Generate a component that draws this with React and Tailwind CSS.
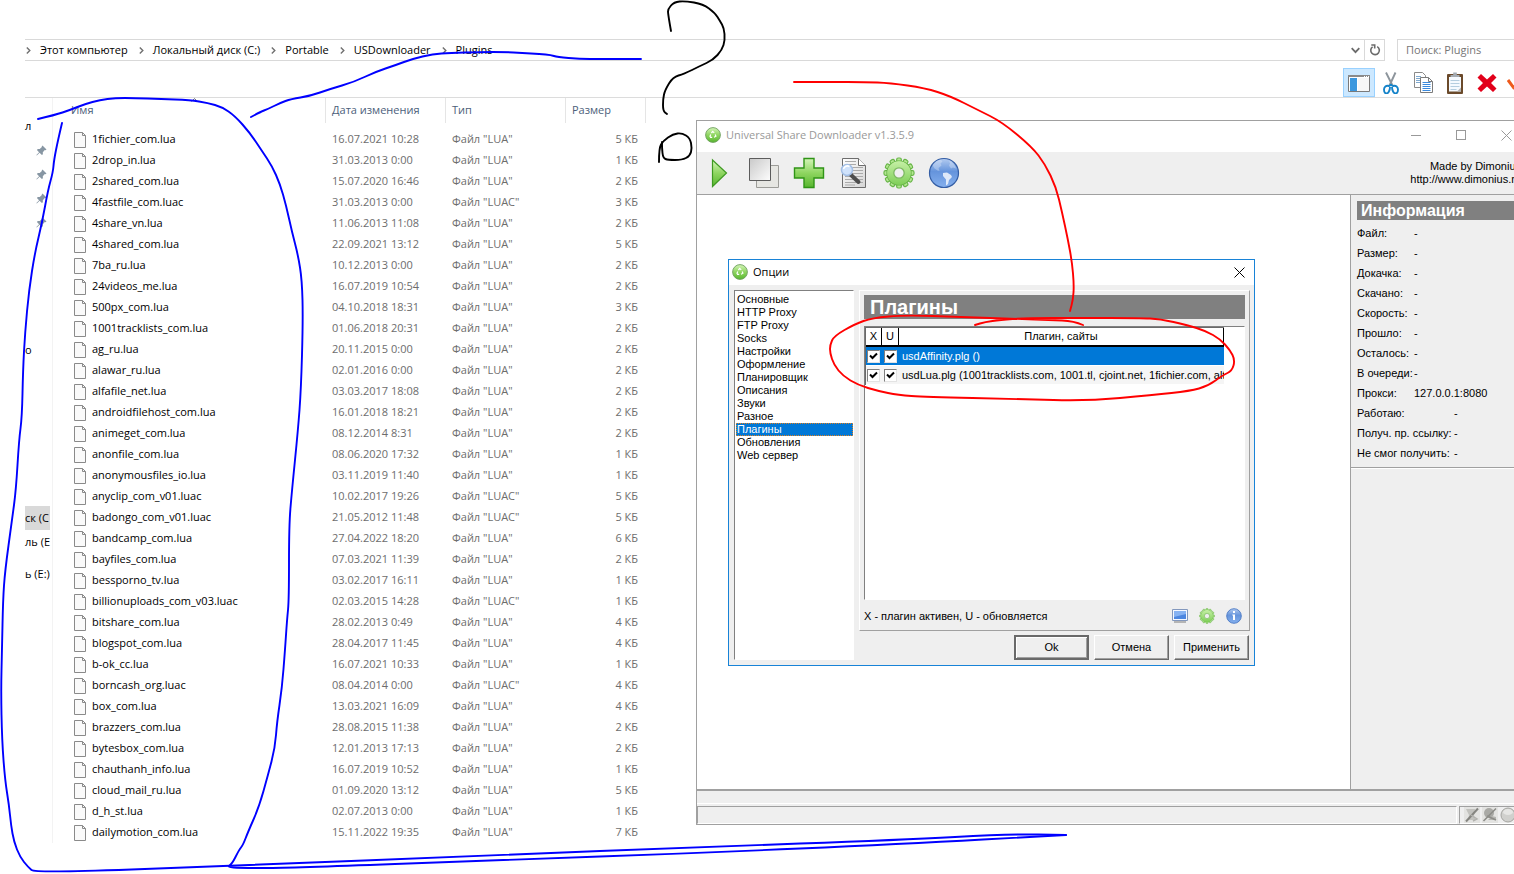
import { useState } from "react";

const CRUMBS = ["Этот компьютер", "Локальный диск (C:)", "Portable", "USDownloader", "Plugins"];

const FILES = [
  ["1fichier_com.lua", "16.07.2021 10:28", 5],
  ["2drop_in.lua", "31.03.2013 0:00", 1],
  ["2shared_com.lua", "15.07.2020 16:46", 2],
  ["4fastfile_com.luac", "31.03.2013 0:00", 3],
  ["4share_vn.lua", "11.06.2013 11:08", 2],
  ["4shared_com.lua", "22.09.2021 13:12", 5],
  ["7ba_ru.lua", "10.12.2013 0:00", 2],
  ["24videos_me.lua", "16.07.2019 10:54", 2],
  ["500px_com.lua", "04.10.2018 18:31", 3],
  ["1001tracklists_com.lua", "01.06.2018 20:31", 2],
  ["ag_ru.lua", "20.11.2015 0:00", 2],
  ["alawar_ru.lua", "02.01.2016 0:00", 2],
  ["alfafile_net.lua", "03.03.2017 18:08", 2],
  ["androidfilehost_com.lua", "16.01.2018 18:21", 2],
  ["animeget_com.lua", "08.12.2014 8:31", 2],
  ["anonfile_com.lua", "08.06.2020 17:32", 1],
  ["anonymousfiles_io.lua", "03.11.2019 11:40", 1],
  ["anyclip_com_v01.luac", "10.02.2017 19:26", 5],
  ["badongo_com_v01.luac", "21.05.2012 11:48", 5],
  ["bandcamp_com.lua", "27.04.2022 18:20", 6],
  ["bayfiles_com.lua", "07.03.2021 11:39", 2],
  ["bessporno_tv.lua", "03.02.2017 16:11", 1],
  ["billionuploads_com_v03.luac", "02.03.2015 14:28", 1],
  ["bitshare_com.lua", "28.02.2013 0:49", 4],
  ["blogspot_com.lua", "28.04.2017 11:45", 4],
  ["b-ok_cc.lua", "16.07.2021 10:33", 1],
  ["borncash_org.luac", "08.04.2014 0:00", 4],
  ["box_com.lua", "13.03.2021 16:09", 4],
  ["brazzers_com.lua", "28.08.2015 11:38", 2],
  ["bytesbox_com.lua", "12.01.2013 17:13", 2],
  ["chauthanh_info.lua", "16.07.2019 10:52", 1],
  ["cloud_mail_ru.lua", "01.09.2020 13:12", 5],
  ["d_h_st.lua", "02.07.2013 0:00", 1],
  ["dailymotion_com.lua", "15.11.2022 19:35", 7],
];

const OPTIONS = [
  "Основные",
  "HTTP Proxy",
  "FTP Proxy",
  "Socks",
  "Настройки",
  "Оформление",
  "Планировщик",
  "Описания",
  "Звуки",
  "Разное",
  "Плагины",
  "Обновления",
  "Web сервер",
];

const INFO = [
  ["Файл:", "-"],
  ["Размер:", "-"],
  ["Докачка:", "-"],
  ["Скачано:", "-"],
  ["Скорость:", "-"],
  ["Прошло:", "-"],
  ["Осталось:", "-"],
  ["В очереди:", "-"],
  ["Прокси:", "127.0.0.1:8080"],
];

const COUNTERS = [
  ["Работаю:", "-"],
  ["Получ. пр. ссылку:", "-"],
  ["Не смог получить:", "-"],
];

const PLUGINS = [
  "usdAffinity.plg ()",
  "usdLua.plg (1001tracklists.com, 1001.tl, cjoint.net, 1fichier.com, alterupload.com)",
];

// Freehand strokes: pen colour and the points the pen went through
const STROKES = [
  ["#0000ff", [[251, 117], [260, 112], [268, 109], [280, 103], [291, 99], [310, 96], [330, 89], [354, 82], [375, 72], [396, 65], [412, 59], [433, 54], [450, 53], [480, 52], [505, 52], [522, 53], [540, 54], [551, 55], [557, 57], [580, 59], [600, 59], [641, 59]]],
  ["#0000ff", [[38, 119], [55, 115], [70, 110], [85, 104], [100, 100], [115, 98], [135, 98], [160, 99], [190, 100], [208, 103], [222, 107], [235, 116], [250, 133], [262, 151], [272, 166], [280, 184], [286, 205], [292, 232], [298, 255], [302, 280], [303, 320], [301, 390], [298, 430], [292, 490], [289, 525], [289, 600], [287, 620], [285, 650], [282, 688], [277, 722], [275, 748], [268, 775], [259, 807], [248, 832], [243, 845], [239, 850], [232, 864], [227, 867], [240, 868], [290, 868], [500, 860], [700, 853], [900, 844], [1066, 835]]],
  ["#0000ff", [[62, 123], [58, 140], [54, 160], [53, 172], [48, 190], [42, 223], [35, 252], [29, 290], [25, 333], [23, 370], [22, 417], [19, 440], [16, 490], [12, 520], [5, 571], [3, 600], [2, 650], [1, 690], [2, 740], [5, 780], [9, 805], [11, 825], [14, 842], [20, 857], [28, 867], [35, 873], [228, 866], [500, 855], [700, 847], [900, 840], [1010, 834], [1066, 835]]],
  ["#000000", [[671, 31], [668, 14], [668, 9], [674, 2], [685, 1], [703, 4], [715, 13], [720, 21], [724, 28], [725, 40], [722, 50], [713, 60], [700, 66], [684, 74], [673, 77], [665, 90], [663, 99], [663, 111], [667, 114]]],
  ["#000000", [[659, 162], [659, 148], [663, 141], [673, 134], [682, 133], [690, 138], [692, 148], [690, 156], [682, 160], [668, 160], [663, 158], [662, 148], [662, 142]]],
  ["#ff0000", [[794, 82], [830, 82], [865, 82], [890, 83], [925, 88], [950, 96], [978, 110], [1002, 122], [1032, 147], [1045, 164], [1056, 187], [1062, 212], [1068, 240], [1072, 262], [1074, 285], [1073, 300], [1070, 311]]],
  ["#ff0000", [[1083, 325], [1074, 321], [1050, 320], [1020, 319], [960, 317], [905, 315], [872, 318], [855, 324], [834, 336], [830, 345], [830, 353], [834, 365], [843, 376], [858, 385], [878, 391], [898, 395], [925, 397], [1020, 399], [1087, 401], [1153, 395], [1190, 391], [1208, 386], [1223, 375], [1232, 371], [1235, 360], [1230, 350], [1220, 339], [1206, 331], [1187, 325], [1160, 319], [1140, 318], [1080, 318], [1025, 318], [1000, 320], [985, 322], [975, 325]]],
];

const SUNKEN = "border border-t-[#808080] border-l-[#808080] border-r-white border-b-white";
const GEAR_TEETH = [0, 30, 60, 90, 120, 150, 180, 210, 240, 270, 300, 330];

function Gradients() {
  return (
    <svg className="absolute size-0" aria-hidden="true">
      <defs>
        <linearGradient id="green" x1="0" y1="0" x2="0" y2="1">
          <stop offset="0" stopColor="#d4f5b8" />
          <stop offset="0.5" stopColor="#8ed560" />
          <stop offset="1" stopColor="#57b62e" />
        </linearGradient>
        <linearGradient id="gear" x1="0" y1="0" x2="0" y2="1">
          <stop offset="0" stopColor="#c5efa5" />
          <stop offset="1" stopColor="#7fcf58" />
        </linearGradient>
        <linearGradient id="grey" x1="0" y1="0" x2="1" y2="1">
          <stop offset="0" stopColor="#c9c9c9" />
          <stop offset="1" stopColor="#fdfdfd" />
        </linearGradient>
        <linearGradient id="globe" x1="0" y1="0" x2="0" y2="1">
          <stop offset="0" stopColor="#b3cbf0" />
          <stop offset="0.45" stopColor="#6594dc" />
          <stop offset="1" stopColor="#85b0ee" />
        </linearGradient>
        <linearGradient id="sheet" x1="0" y1="0" x2="1" y2="1">
          <stop offset="0" stopColor="#ffffff" />
          <stop offset="1" stopColor="#d5d5d5" />
        </linearGradient>
      </defs>
    </svg>
  );
}

function AppIcon() {
  return (
    <svg className="size-4 shrink-0" viewBox="0 0 16 16">
      <circle cx="8" cy="8" r="7.4" fill="url(#green)" stroke="#6f9f60" strokeWidth="0.9" />
      <path d="M6.4 6l1.300-1.600 1.500 1.500M10.200 7.500l.7 1.800-1.900.9M7.200 10.300H5.600l-.6-1.100.8-1.700" fill="none" stroke="#fff" strokeWidth="1.200" />
    </svg>
  );
}

function GearIcon({ className }) {
  return (
    <svg className={className} viewBox="0 0 32 32">
      <g fill="url(#gear)" stroke="#68b548" strokeWidth="1.200">
        {GEAR_TEETH.map((angle) => (
          <rect key={angle} x="13.700" y="1" width="4.600" height="6" rx="1.500" transform={`rotate(${angle} 16 16)`} />
        ))}
        <circle cx="16" cy="16" r="12" />
      </g>
      <circle cx="16" cy="16" r="11.800" fill="url(#gear)" />
      <circle cx="16" cy="16" r="5.200" fill="#efefef" stroke="#7db862" strokeWidth="1.300" />
    </svg>
  );
}

function FileIcon() {
  return (
    <svg className="h-4 w-3 shrink-0" viewBox="0 0 12 16">
      <path d="M.5.5h8l3 3v12H.5z" fill="#fafafa" stroke="#8a8a8a" />
      <path d="M8.500.5v3h3" fill="none" stroke="#8a8a8a" />
    </svg>
  );
}

function PinIcon() {
  return (
    <svg className="size-[11px]" viewBox="0 0 11 11" fill="#8796a3">
      <path d="M6.500.5l4 4-1 .8-.7-.2-2 2.200.1 1.900-1 .9-2.300-2.300L.8 10.500.4 10l2.700-2.800L.9 5l.9-1 1.900.1 2.200-2-.2-.7z" />
    </svg>
  );
}

function Chevron() {
  return (
    <svg className="h-[7px] w-[5px] shrink-0" viewBox="0 0 5 7" fill="none" stroke="#707070" strokeWidth="1.400">
      <path d="M.8.6L3.800 3.500.8 6.400" />
    </svg>
  );
}

function CloseIcon() {
  return (
    <svg className="size-[11px]" viewBox="0 0 11 11" fill="none" stroke="currentColor">
      <path d="M.5.5l10 10M10.500.5l-10 10" />
    </svg>
  );
}

function AddressBar() {
  return (
    <div className="flex h-[22px] gap-3 pl-[25px] text-[11px]">
      <div className="flex flex-1 border-y border-r border-[#d9d9d9]">
        <nav className="flex flex-1 items-center">
          {CRUMBS.map((crumb) => (
            <div key={crumb} className="flex items-center">
              <span className="flex w-[15px] pl-px">
                <Chevron />
              </span>
              <a href="#" className="pr-2.5 whitespace-nowrap text-black">{crumb}</a>
            </div>
          ))}
        </nav>
        <button aria-label="История" className="flex w-[19px] items-center justify-center border-r border-[#d9d9d9]">
          <svg className="h-[7px] w-[9px]" viewBox="0 0 9 7" fill="none" stroke="#6b6b6b" strokeWidth="1.800">
            <path d="M.7 1.200l3.800 3.900 3.800-3.900" />
          </svg>
        </button>
        <button aria-label="Обновить" className="flex w-[19px] items-center justify-center">
          <svg className="size-3" viewBox="0 0 12 12" fill="none" stroke="#6b6b6b" strokeWidth="1.600">
            <path d="M8.200 2.600a4.300 4.300 0 1 1-4.600.2" />
            <path d="M2.300 1h3.400v3.500" />
          </svg>
        </button>
      </div>
      <div className="flex w-[117px] border-y border-l border-[#d9d9d9]">
        <input
          type="search"
          aria-label="Поиск"
          placeholder="Поиск: Plugins"
          className="w-full px-2 outline-none placeholder:text-[#767676]"
        />
      </div>
    </div>
  );
}

function Ribbon() {
  return (
    <div className="ml-[25px] flex h-[37px] items-end justify-end overflow-hidden border-b border-[#dcdcdc]">
      <button aria-label="Область навигации" className="flex h-[29px] w-8 items-center justify-center border border-[#99d1ff] bg-[#cce8ff] pt-0.5">
        <svg className="h-[17px] w-[22px]" viewBox="0 0 22 17">
          <path d="M.5.5h21v16H.5z" fill="#fff" stroke="#7a7a7a" />
          <path d="M0 0h22v2H0z" fill="#8a8a8a" />
          <path d="M16 1h1v1h-1zM18 1h1v1h-1zM20 1h1v1h-1z" fill="#fff" />
          <path d="M2 3h7v13H2z" fill="#3b97de" />
          <path d="M10 3h11v13H10z" fill="#f7f7f7" />
        </svg>
      </button>
      <button aria-label="Вырезать" className="flex h-[29px] w-8 items-center justify-center">
        <svg className="h-[22px] w-4" viewBox="0 0 16 22" fill="none">
          <path d="M3 .5l6.500 13M12.500.5L6.500 13.500" stroke="#8d959c" strokeWidth="1.900" />
          <path d="M9 12.500L6 14c-3-1-5 1-5 3.500s1 4 2.500 4S7 19 7 15M7 12.500l3 1.500c3-1 5 1 5 3.500s-1 4-2.500 4S9 19 9 15" stroke="#1583c9" strokeWidth="1.900" />
        </svg>
      </button>
      <button aria-label="Копировать" className="flex h-[29px] w-8 items-center justify-center">
        <svg className="h-[22px] w-[19px]" viewBox="0 0 19 22">
          <path d="M.5.5h8l3 3v12H.5z" fill="#fff" stroke="#8a8a8a" />
          <path d="M2 4.500h5M2 6.500h5M2 8.500h5M2 10.500h5" stroke="#7fa9cf" />
          <path d="M6.500 5.500h8l4 4v11h-12z" fill="#fff" stroke="#7b7b7b" />
          <path d="M14.500 5.500v4h4" fill="none" stroke="#7b7b7b" />
          <path d="M8.500 10.500h8M8.500 12.500h8M8.500 14.500h8M8.500 16.500h8M8.500 18.500h8" stroke="#3a8ade" />
        </svg>
      </button>
      <button aria-label="Вставить" className="flex h-[29px] w-8 items-center justify-center">
        <svg className="h-[22px] w-4" viewBox="0 0 16 22">
          <rect y="2" width="16" height="20" rx="1" fill="#6b4a2b" />
          <path d="M2 5h12v14.500H2z" fill="#f5faff" />
          <path d="M3.500 8.500h9M3.500 11.500h9M3.500 14.500h9M3.500 17.500h6" stroke="#b5cee0" />
          <path d="M10 19.500l4-4v4z" fill="#b4b4b4" />
          <path d="M3.500 5V3h2.700V.5h3.600V3h2.700v2z" fill="#a4abb2" />
        </svg>
      </button>
      <button aria-label="Удалить" className="flex h-[29px] w-8 items-center justify-center">
        <svg className="size-5" viewBox="0 0 20 20">
          <path d="M4 1l6 5.500L16 1l3.500 3.500L14 10l5.500 5.500L16 19l-6-5.500L4 19 .5 15.500 6 10 .5 4.500z" fill="#e2001a" />
        </svg>
      </button>
      <button aria-label="Свойства" className="flex h-[29px] w-[11px] items-center overflow-hidden pl-1">
        <svg className="h-[14px] w-[18px] shrink-0" viewBox="0 0 18 14" fill="none" stroke="#ee5a1c" strokeWidth="3">
          <path d="M1 4l5.500 7.500L17 1" />
        </svg>
      </button>
    </div>
  );
}

function NavPane() {
  return (
    <aside className="flex w-[53px] shrink-0 flex-col border-r border-[#f3f3f3] pt-4 pr-0.5 pl-[25px] text-[11px] whitespace-nowrap">
      <div className="flex h-6 items-center">л</div>
      {[0, 1, 2, 3].map((pin) => (
        <div key={pin} className="flex h-6 items-center justify-center pl-2">
          <PinIcon />
        </div>
      ))}
      <div className="mt-[104px] flex h-6 items-center">о</div>
      <div className="mt-36 flex h-6 items-center bg-[#d9d9d9]">ск (C</div>
      <div className="flex h-6 items-center">ль (E</div>
      <div className="mt-2 flex h-6 items-center">ь (E:)</div>
    </aside>
  );
}

function FileList() {
  return (
    <table className="w-[593px] table-fixed border-separate border-spacing-0 self-start text-[11px] text-[#6d6d6d]">
      <thead className="text-left text-[#4c607a]">
        <tr className="h-[25px]">
          <th className="relative w-[273px] border-r border-[#e5e5e5] pl-[18px] font-normal">
            Имя
            <svg className="absolute top-0 left-[138px] h-1 w-[7px]" viewBox="0 0 7 4" fill="none" stroke="#777">
              <path d="M.5 3.500l3-3 3 3" />
            </svg>
          </th>
          <th className="w-[120px] border-r border-[#e5e5e5] pl-1.5 font-normal">Дата изменения</th>
          <th className="w-[120px] border-r border-[#e5e5e5] pl-1.5 font-normal">Тип</th>
          <th className="w-[80px] border-r border-[#e5e5e5] pl-1.5 font-normal">Размер</th>
        </tr>
      </thead>
      <tbody className="before:block before:h-1.5">
        {FILES.map(([name, date, size]) => (
          <tr key={name} className="h-[21px]">
            <td className="pl-[21px] text-black">
              <div className="flex items-center gap-1.5">
                <FileIcon />
                {name}
              </div>
            </td>
            <td className="pl-1.5">{date}</td>
            <td className="pl-1.5">Файл "{name.split(".").pop().toUpperCase()}"</td>
            <td className="pr-2 text-right">{size} КБ</td>
          </tr>
        ))}
      </tbody>
    </table>
  );
}

function Toolbar() {
  const button = "flex h-full w-[45px] items-center pl-1.5";
  return (
    <div className="flex h-[43px] shrink-0 border-b border-[#a0a0a0] bg-[#efefef]">
      <button aria-label="Старт" className={button}>
        <svg className="size-8" viewBox="0 0 32 32">
          <path d="M9.500 3L23.500 16 9.500 29.500z" fill="url(#green)" stroke="#3f9a22" strokeWidth="1.200" />
        </svg>
      </button>
      <button aria-label="Стоп" className={button}>
        <svg className="size-8" viewBox="0 0 32 32">
          <path d="M8.500 8.500h22v22h-22z" fill="#e6e6e2" stroke="#9c9c98" />
          <path d="M1.500 1.500h21v22h-21z" fill="url(#grey)" stroke="#5c5c5c" />
        </svg>
      </button>
      <button aria-label="Добавить" className={button}>
        <svg className="size-8" viewBox="0 0 32 32">
          <path d="M11 1.500h10v9.500h9.500v10H21v9.500H11V21H1.500V11H11z" fill="url(#green)" stroke="#2f9416" strokeWidth="1.400" />
        </svg>
      </button>
      <button aria-label="Журнал" className={button}>
        <svg className="size-8" viewBox="0 0 32 32">
          <path d="M4.500 1.500h16l7 7v22h-23z" fill="url(#sheet)" stroke="#6d6d6d" />
          <path d="M20.500 1.500v7h7" fill="#fff" stroke="#6d6d6d" />
          <path d="M7 4.500h11M7 7.500h11M7 10.500h18M7 13.500h18M7 16.500h18M7 19.500h18M7 22.500h18M7 25.500h18M7 28h10" stroke="#aaa" />
          <path d="M12.500 17.500l8 7.500" stroke="#4d4d4d" strokeWidth="4" strokeLinecap="round" />
          <circle cx="9" cy="13" r="5.500" fill="#cfe2fb" stroke="#a3bfe6" strokeWidth="1.500" />
          <path d="M5.500 12a4 4 0 0 1 6-2.500" fill="none" stroke="#fff" strokeWidth="1.500" />
        </svg>
      </button>
      <button aria-label="Настройки" className={button}>
        <GearIcon className="size-8" />
      </button>
      <button aria-label="Сайт" className={button}>
        <svg className="size-8" viewBox="0 0 32 32">
          <circle cx="16" cy="16" r="14.500" fill="url(#globe)" stroke="#345ea5" strokeWidth="1.200" />
          <path d="M4.500 8c2-3 5-5 8-5.500l2 2-2 2 1 2-3 2.500 1 3-2-.5-3-2zM21 3.500c3 1 6 4 7 8l-3-1-2 1-2-3 1-2z" fill="#e9f1fc" fillOpacity="0.350" />
          <path d="M15 16l4-.5 4 2.500 1 2-3 3-1 4-2 1.500 0-6-3-3.500z" fill="#f1f6fd" fillOpacity="0.850" />
        </svg>
      </button>
      <p className="flex-1 self-center pr-2 text-right text-[11px] leading-[13px] text-black">
        Made by Dimonius
        <br />
        http://www.dimonius.ru
      </p>
    </div>
  );
}

function InfoPanel() {
  return (
    <aside className="flex w-[179px] shrink-0 flex-col border-l border-[#a0a0a0] bg-[#efefef] pt-1.5 text-[11px] text-black">
      <h2 className="ml-1.5 h-[19px] bg-[#808080] pl-1 text-base leading-[19px] font-bold text-white">Информация</h2>
      <dl className="mt-[3px] ml-1.5">
        {INFO.map(([label, value]) => (
          <div key={label} className="flex h-5 items-center">
            <dt className="w-[57px] whitespace-nowrap">{label}</dt>
            <dd>{value}</dd>
          </div>
        ))}
        {COUNTERS.map(([label, value]) => (
          <div key={label} className="flex h-5 items-center">
            <dt className="w-[97px] whitespace-nowrap">{label}</dt>
            <dd>{value}</dd>
          </div>
        ))}
      </dl>
      <hr className="mt-1 border-t border-b border-t-[#a0a0a0] border-b-white" />
    </aside>
  );
}

function StatusBar() {
  return (
    <footer className="shrink-0 border-t-2 border-[#a0a0a0] bg-[#efefef]">
      <div className="h-[13px] border-b border-white" />
      <div className="mt-0.5 flex h-[18px] gap-0.5">
        <div className="flex-1 border border-t-[#a0a0a0] border-r-white border-b-white border-l-[#a0a0a0]" />
        <div className="flex w-[70px] items-center gap-0.5 overflow-hidden border border-t-[#a0a0a0] border-r-white border-b-white border-l-[#a0a0a0] pl-1">
          <svg className="size-4 shrink-0" viewBox="0 0 16 16">
            <path d="M0 0h16v16H0z" fill="#e3e3e1" />
            <path d="M2 2h9l-1 7 2 4H4l1-5z" fill="#c2c2be" />
            <path d="M2 14.500L14 1.500" stroke="#858580" strokeWidth="2" />
            <path d="M7 8l6 4-4 2" fill="none" stroke="#b2b2ae" strokeWidth="1.500" />
          </svg>
          <svg className="size-4 shrink-0" viewBox="0 0 16 16">
            <path d="M0 0h16v16H0z" fill="#e3e3e1" />
            <circle cx="7" cy="6" r="5" fill="#a9a9a5" />
            <path d="M6 13h8v-3l-4-1z" fill="#b5b5b1" />
            <path d="M1.500 14L14 1.500M5 9l9 4" stroke="#8d8d88" strokeWidth="1.600" />
          </svg>
          <svg className="size-4 shrink-0" viewBox="0 0 16 16">
            <circle cx="8" cy="8" r="7" fill="#d0d0cd" stroke="#a5a5a1" />
            <ellipse cx="8" cy="5" rx="5" ry="3" fill="#e6e6e4" />
          </svg>
        </div>
      </div>
    </footer>
  );
}

function DownloaderWindow() {
  return (
    <section className="absolute top-[120px] -right-4 bottom-[49px] left-[696px] flex flex-col border border-[#a0a0a0] bg-white font-['Liberation_Sans',sans-serif]">
      <header className="flex h-[31px] shrink-0 items-center pb-[3px] pl-2 font-['Open_Sans',sans-serif] text-[#999]">
        <AppIcon />
        <h1 className="flex-1 pl-[5px] text-[11px]">Universal Share Downloader v1.3.5.9</h1>
        <button aria-label="Свернуть" className="flex h-full w-[45px] items-center justify-center">
          <span className="h-px w-2.5 bg-[#999]" />
        </button>
        <button aria-label="Развернуть" className="flex h-full w-[45px] items-center justify-center">
          <span className="size-2.5 border border-[#999]" />
        </button>
        <button aria-label="Закрыть" className="flex h-full w-[46px] items-center justify-center">
          <CloseIcon />
        </button>
      </header>
      <Toolbar />
      <div className="flex flex-1">
        <main className="flex-1" />
        <InfoPanel />
      </div>
      <StatusBar />
    </section>
  );
}

function Check({ label }) {
  return (
    <span className="relative flex size-[13px] border border-t-[#808080] border-r-[#e3e3e3] border-b-[#e3e3e3] border-l-[#808080] bg-white">
      <input type="checkbox" aria-label={label} defaultChecked className="peer absolute inset-0 appearance-none" />
      <svg className="pointer-events-none invisible size-[11px] peer-checked:visible" viewBox="0 0 11 11" fill="none" stroke="#000" strokeWidth="2">
        <path d="M2 4.500l2.500 2.500L9 2.500" />
      </svg>
    </span>
  );
}

function PluginTable() {
  const head = "border-r border-b-2 border-black font-normal";
  return (
    <div className={`mt-[7px] h-[274px] overflow-hidden bg-white ${SUNKEN}`}>
      <table className="w-[359px] table-fixed border-separate border-spacing-0 border-t border-l border-[#696969]">
        <thead>
          <tr className="h-[19px]">
            <th className={`w-4 ${head}`}>X</th>
            <th className={`w-[17px] ${head}`}>U</th>
            <th className={head}>Плагин, сайты</th>
          </tr>
        </thead>
        <tbody>
          {PLUGINS.map((plugin, i) => (
            <tr key={plugin} className={`h-[19px] ${i === 0 ? "bg-[#0078d7] text-white" : "bg-[#f5f5f5]"}`}>
              <td className="border-b border-white pl-px"><Check label={`Активен: ${plugin}`} /></td>
              <td className="border-b border-white pl-0.5"><Check label={`Обновляется: ${plugin}`} /></td>
              <td className="overflow-hidden border-b border-white pl-[3px] whitespace-nowrap">{plugin}</td>
            </tr>
          ))}
        </tbody>
      </table>
    </div>
  );
}

function DialogButton({ children, primary }) {
  return (
    <button
      className={
        primary
          ? "h-[25px] w-[75px] border-2 border-[#696969] bg-[#efefef] shadow-[inset_1px_1px_#fff,inset_-1px_-1px_#a0a0a0]"
          : "h-[25px] w-[75px] border border-t-white border-r-[#696969] border-b-[#696969] border-l-white bg-[#efefef] shadow-[inset_-1px_-1px_#a0a0a0]"
      }
    >
      {children}
    </button>
  );
}

function OptionsDialog() {
  const [page, setPage] = useState("Плагины");

  return (
    <section role="dialog" aria-label="Опции" className="absolute top-[259px] left-[728px] w-[527px] border border-[#1883d7] bg-[#efefef] font-['Liberation_Sans',sans-serif] text-[11px] text-black">
      <header className="flex h-[25px] items-center bg-white pr-[9px] pb-px pl-[3px] font-['Open_Sans',sans-serif]">
        <AppIcon />
        <h2 className="flex-1 pl-[5px]">Опции</h2>
        <button aria-label="Закрыть">
          <CloseIcon />
        </button>
      </header>
      <div className="flex gap-[5px] py-[5px] pr-1 pl-[5px]">
        <ul className={`w-[120px] bg-white pt-0.5 pl-px ${SUNKEN}`}>
          {OPTIONS.map((option) => (
            <li key={option} className="flex h-[13px]">
              <button
                onClick={() => setPage(option)}
                className={`w-full px-px text-left leading-[13px] ${
                  page === option ? "bg-[#0078d7] text-white outline-1 -outline-offset-1 outline-dotted outline-[#e08020]" : ""
                }`}
              >
                {option}
              </button>
            </li>
          ))}
        </ul>
        <div className="flex-1">
          <div className="border border-t-white border-r-[#a0a0a0] border-b-[#a0a0a0] border-l-white p-1">
            <h3 className="h-6 bg-[#808080] pl-1.5 text-xl leading-6 font-bold text-white">Плагины</h3>
            <PluginTable />
            <div className="flex h-[26px] items-center gap-[11px] pt-1.5 pr-[3px]">
              <p className="flex-1">X - плагин активен, U - обновляется</p>
              <button aria-label="Окно">
                <svg className="size-4" viewBox="0 0 16 16">
                  <path d="M.5 1.500h15v11H.5z" fill="#f5f8ff" stroke="#8398bd" />
                  <path d="M2 3h12v8H2z" fill="#4c86e0" />
                  <path d="M2 3h12v3L2 9z" fill="#86b2f2" />
                  <path d="M2 13h12v2H2z" fill="#b5b5b5" />
                </svg>
              </button>
              <button aria-label="Настроить">
                <GearIcon className="size-4" />
              </button>
              <button aria-label="О плагине">
                <svg className="size-4" viewBox="0 0 16 16">
                  <circle cx="8" cy="8" r="7.300" fill="url(#globe)" stroke="#4a78c4" strokeWidth="0.900" />
                  <path d="M7 3h2v2H7zM6.300 6.500H9V12H7V7.500h-.7z" fill="#fff" />
                </svg>
              </button>
            </div>
          </div>
          <div className="mt-1 flex justify-end gap-[5px] pr-px">
            <DialogButton primary>Ok</DialogButton>
            <DialogButton>Отмена</DialogButton>
            <DialogButton>Применить</DialogButton>
          </div>
        </div>
      </div>
    </section>
  );
}

// Rounds the corners by running a curve through the middle of each segment
function smoothPath(points) {
  let d = `M${points[0].join(" ")}`;
  for (let i = 1; i < points.length - 1; i++) {
    const [x, y] = points[i];
    const [nextX, nextY] = points[i + 1];
    d += `Q${x} ${y} ${(x + nextX) / 2} ${(y + nextY) / 2}`;
  }
  return `${d}L${points[points.length - 1].join(" ")}`;
}

function PenMarks() {
  return (
    <svg
      className="pointer-events-none absolute top-0 left-0 h-[874px] w-[1514px]"
      viewBox="0 0 1514 874"
      fill="none"
      strokeWidth="1.900"
      strokeLinecap="round"
      strokeLinejoin="round"
    >
      {STROKES.map(([color, points], i) => (
        <path key={i} d={smoothPath(points)} stroke={color} />
      ))}
    </svg>
  );
}

export default function App() {
  return (
    <div className="relative min-h-screen overflow-hidden bg-white pt-[39px] font-['Open_Sans',sans-serif]">
      <Gradients />
      <AddressBar />
      <Ribbon />
      <div className="flex">
        <NavPane />
        <FileList />
      </div>
      <DownloaderWindow />
      <OptionsDialog />
      <PenMarks />
    </div>
  );
}
